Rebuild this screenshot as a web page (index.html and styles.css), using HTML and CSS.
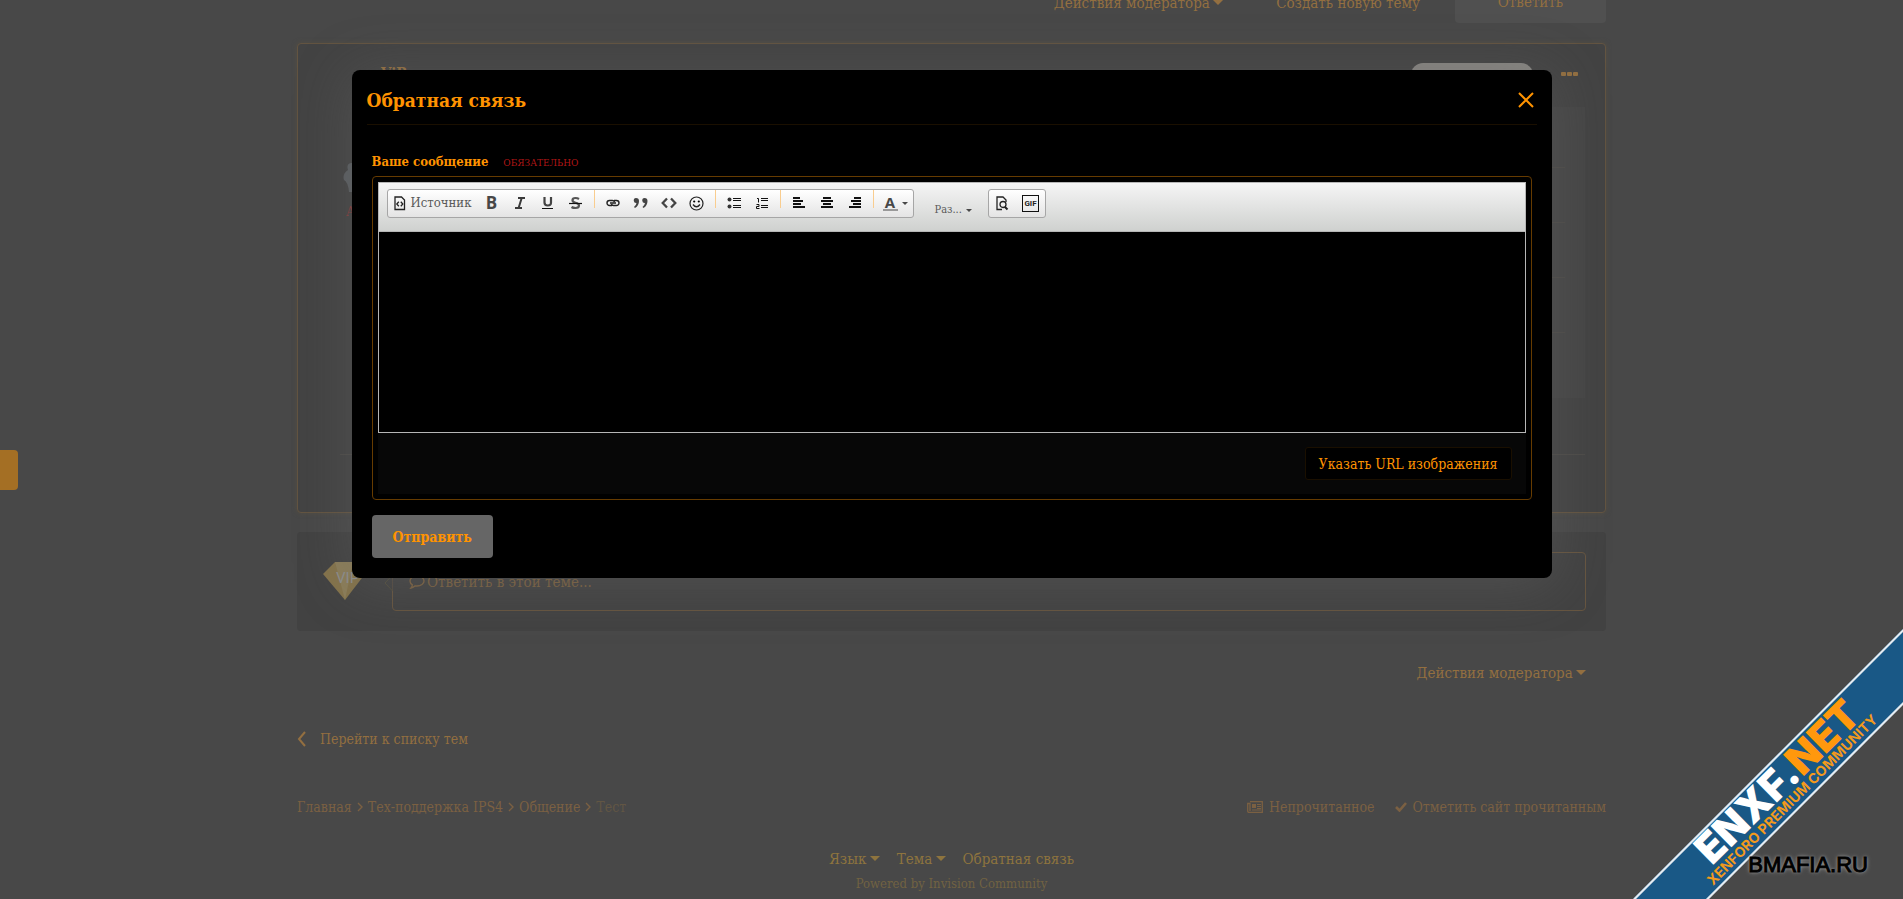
FILE: index.html
```
<!DOCTYPE html>
<html lang="ru">
<head>
<meta charset="utf-8">
<title>Обратная связь</title>
<link rel="stylesheet" href="styles.css">
</head>
<body>
<main class="page">
  <nav class="topbar">
    <a href="#" class="link">Действия модератора <i class="caret"></i></a>
    <a href="#" class="link">Создать новую тему</a>
    <a href="#" class="reply-btn">Ответить</a>
  </nav>

  <article class="post">
    <header class="post-head">
      <a href="#" class="author">ViR</a>
      <span class="badge"></span>
      <button class="dots" aria-label="Ещё"><i></i><i></i><i></i></button>
    </header>
    <div class="post-body">
      <div class="post-user">
        <svg class="avatar" viewBox="0 0 60 34"><path d="M8 3Q3 4 5 10Q-1 14 1 20Q5 22 6 32H60V3Z"/></svg>
        <span class="rank">Администратор</span>
      </div>
      <div class="post-text"><hr><hr><hr><hr></div>
    </div>
    <hr class="post-line">
  </article>

  <section class="answer">
    <svg class="diamond" viewBox="0 0 44 40"><path d="M13 1H31L43 13L23 39L1 13Z" fill="#84734b"/><path d="M13 1L23 39L31 1Z" fill="#8b7d59"/><text x="14" y="22" class="vip">VIP</text></svg>
    <a href="#" class="answer-box">
      <svg class="answer-tip" viewBox="0 0 9 16"><path d="M8.500 0L1 8L8.500 16"/></svg>
      <svg class="bubble" viewBox="0 0 16 14"><path d="M8 1C12 1 15 3.200 15 6S12 11 8 11C7.400 11 6.800 11 6.200 10.800C5 12 3.500 12.700 2 13C2.800 12 3.300 11 3.400 9.800C2 9 1 7.600 1 6C1 3.200 4 1 8 1Z"/></svg>
      Ответить в этой теме...
    </a>
  </section>

  <div class="moderate"><a href="#" class="link">Действия модератора <i class="caret"></i></a></div>

  <a href="#" class="back"><svg viewBox="0 0 10 16"><path d="M8 1L2 8L8 15"/></svg>Перейти к списку тем</a>

  <div class="crumbs">
    <nav class="trail">
      <a href="#">Главная</a><svg viewBox="0 0 6 10"><path d="M1 1L5 5L1 9"/></svg>
      <a href="#">Тех-поддержка IPS4</a><svg viewBox="0 0 6 10"><path d="M1 1L5 5L1 9"/></svg>
      <a href="#">Общение</a><svg viewBox="0 0 6 10"><path d="M1 1L5 5L1 9"/></svg>
      <span>Тест</span>
    </nav>
    <nav class="marks">
      <a href="#"><svg viewBox="0 0 16 12" width="16" height="12"><path d="M3 .7H15.300V11.300H2Q.7 11.300 .7 10V2.500H3V10" fill="none" stroke="currentColor" stroke-width="1.300"/><path d="M5 3H9V7H5ZM10 3H14V4H10ZM10 5H14V6H10ZM10 7H14V8H10ZM5 8.500H14V9.500H5Z" fill="currentColor"/></svg>Непрочитанное</a>
      <a href="#"><svg viewBox="0 0 12 10" width="12" height="10"><path d="M1 5L4.500 8.500L11 1" fill="none" stroke="currentColor" stroke-width="2.600"/></svg>Отметить сайт прочитанным</a>
    </nav>
  </div>

  <footer class="footer">
    <nav class="foot-links">
      <a href="#">Язык <i class="caret"></i></a>
      <a href="#">Тема <i class="caret"></i></a>
      <a href="#">Обратная связь</a>
    </nav>
    <a href="#" class="powered">Powered by Invision Community</a>
  </footer>
</main>

<button class="side-tab" aria-label="Меню"></button>

<div class="overlay">
  <form class="dialog" role="dialog" aria-labelledby="dlg-title">
    <header class="dialog-head">
      <h2 id="dlg-title">Обратная связь</h2>
      <button type="button" class="close" aria-label="Закрыть"><svg viewBox="0 0 16 16"><path d="M1 1L15 15M15 1L1 15"/></svg></button>
    </header>
    <div class="dialog-body">
      <div class="field-head"><label for="msg">Ваше сообщение</label><span class="required">Обязательно</span></div>
      <div class="editor-frame">
        <div class="editor">
          <div class="toolbar">
            <div class="group">
              <button type="button" class="tool source"><svg width="12" height="15" viewBox="0 0 12 15"><path d="M1 1H7.500L10.500 4V13.500H1Z" fill="none" stroke="#222" stroke-width="1.300"/><path d="M4.800 5.800L2.800 8L4.800 10.200M6.800 5.800L8.800 8L6.800 10.200" fill="none" stroke="#222" stroke-width="1.300"/></svg><span>Источник</span></button>
              <button type="button" class="tool b" aria-label="Жирный">B</button>
              <button type="button" class="tool" aria-label="Курсив"><svg width="12" height="14" viewBox="0 0 12 14"><path d="M4 2H11M1 12H8M7.700 2L4.600 12" fill="none" stroke="#3a3a3a" stroke-width="2"/></svg></button>
              <button type="button" class="tool" aria-label="Подчёркнутый"><svg width="12" height="14" viewBox="0 0 12 14"><path d="M2.500 1V6.500Q2.500 9.500 5.800 9.500T9 6.500V1" fill="none" stroke="#444" stroke-width="2.200"/><path d="M0 12.500H11" stroke="#111"/></svg></button>
              <button type="button" class="tool" aria-label="Зачёркнутый"><svg width="13" height="14" viewBox="0 0 13 14"><path d="M10 3Q8.500 2 6.500 2Q3.500 2 3.500 4.200Q3.500 6 6.500 6.700Q10 7.500 10 9.500Q10 12 6.500 12Q4 12 2.500 11" fill="none" stroke="#555" stroke-width="2.200"/><path d="M0 7.500H13" stroke="#111" stroke-width="1.200"/></svg></button>
              <i class="sep"></i>
              <button type="button" class="tool" aria-label="Ссылка"><svg width="14" height="8" viewBox="0 0 14 8"><path d="M6 6.500H3.500A2.500 2.500 0 0 1 3.500 1.500H6.500Q8 1.500 8.500 3M8 1.500H10.500A2.500 2.500 0 0 1 10.500 6.500H7.500Q6 6.500 5.500 5M4 4H10" fill="none" stroke="#222" stroke-width="1.400"/></svg></button>
              <button type="button" class="tool" aria-label="Цитата"><svg width="15" height="12" viewBox="0 0 15 12"><path d="M3 1A2.500 2.500 0 1 0 3.500 6Q3 8.500 1 10L2 11Q6 8.500 6 4Q6 1 3 1ZM11.500 1A2.500 2.500 0 1 0 12 6Q11.500 8.500 9.500 10L10.500 11Q14.500 8.500 14.500 4Q14.500 1 11.500 1Z" fill="#444"/></svg></button>
              <button type="button" class="tool" aria-label="Код"><svg width="16" height="12" viewBox="0 0 16 12"><path d="M6 1.500L1.700 6L6 10.500M10 1.500L14.300 6L10 10.500" fill="none" stroke="#444" stroke-width="2.300"/></svg></button>
              <button type="button" class="tool" aria-label="Смайлы"><svg width="15" height="15" viewBox="0 0 15 15"><circle cx="7.500" cy="7.500" r="6.500" fill="none" stroke="#222" stroke-width="1.200"/><path d="M4 8.500Q7.500 13 11 8.500" fill="none" stroke="#222" stroke-width="1.300"/><circle cx="5.200" cy="5.500" r="1.100"/><circle cx="9.800" cy="5.500" r="1.100"/></svg></button>
              <i class="sep"></i>
              <button type="button" class="tool" aria-label="Маркированный список"><svg width="14" height="12" viewBox="0 0 14 12"><circle cx="2.500" cy="2.500" r="2" fill="#333"/><circle cx="2.500" cy="9.500" r="2" fill="#333"/><path d="M6 1.500H14M6 3.500H14M6 8.500H14M6 10.500H14" stroke="#111"/></svg></button>
              <button type="button" class="tool" aria-label="Нумерованный список"><svg width="12" height="12" viewBox="0 0 12 12"><path d="M1 1.500H2.500V5.500M.5 7.500H3V9.500H.5V11.500H3.500" fill="none" stroke="#111"/><path d="M5 1.500H12M5 3.500H12M5 8.500H12M5 10.500H12" stroke="#111"/></svg></button>
              <i class="sep"></i>
              <button type="button" class="tool" aria-label="По левому краю"><svg width="12" height="12" viewBox="0 0 12 12"><path d="M0 1H7M0 4H10M0 7H8M0 10H12" stroke="#111" stroke-width="2"/></svg></button>
              <button type="button" class="tool" aria-label="По центру"><svg width="12" height="12" viewBox="0 0 12 12"><path d="M2 1H10M0 4H12M2 7H10M0 10H12" stroke="#111" stroke-width="2"/></svg></button>
              <button type="button" class="tool" aria-label="По правому краю"><svg width="12" height="12" viewBox="0 0 12 12"><path d="M5 1H12M2 4H12M4 7H12M0 10H12" stroke="#111" stroke-width="2"/></svg></button>
              <i class="sep"></i>
              <button type="button" class="tool color" aria-label="Цвет текста"><span>A</span><i class="tri"></i></button>
            </div>
            <button type="button" class="size">Раз...<i class="tri"></i></button>
            <div class="group">
              <button type="button" class="tool" aria-label="Просмотр"><svg width="13" height="15" viewBox="0 0 13 15"><path d="M6 13.500H1V1H7L10 4V6" fill="none" stroke="#222" stroke-width="1.300"/><circle cx="7" cy="8.500" r="3" fill="none" stroke="#222" stroke-width="1.300"/><path d="M9 11L11.500 13.500" stroke="#222" stroke-width="2"/></svg></button>
              <button type="button" class="tool"><span class="gif">GIF</span></button>
            </div>
          </div>
          <textarea id="msg"></textarea>
        </div>
        <div class="attach"><button type="button" class="url-btn">Указать URL изображения</button></div>
      </div>
      <button type="submit" class="submit">Отправить</button>
    </div>
  </form>
</div>

<svg class="ribbon" viewBox="0 0 272 272" aria-label="ENXF.NET">
  <path d="M272 2L2 272H76L272 76Z" fill="#195886"/>
  <path d="M273 2.500L3 272.500M273 75.500L75 273.500" stroke="#e4ecf2" stroke-width="2.200"/>
  <g transform="translate(81 239) rotate(-44.500)">
    <text class="rib-big" x="0" y="0">ENXF.<tspan fill="#ff980d">NET</tspan></text>
  </g>
  <g transform="translate(82 259) rotate(-45)"><text class="rib-small" x="0" y="0">XENFORO PREMIUM COMMUNITY</text></g>
</svg>
<span class="watermark">BMAFIA.RU</span>
</body>
</html>
```

FILE: styles.css
```
* { box-sizing: border-box; }

body {
  margin: 0;
  height: 100vh;
  overflow: hidden;
  position: relative;
  background: #484848;
  color: #936f40;
  font: 15px/20px "Roboto Slab", "DejaVu Serif Condensed", "DejaVu Serif", serif;
}

a { color: inherit; text-decoration: none; }
button { font: inherit; color: inherit; border: 0; padding: 0; background: none; }
svg { display: block; flex: none; }

.page { max-width: 1309px; margin: 0 auto; }

.caret {
  display: inline-block;
  border: 5px solid transparent;
  border-top-color: currentColor;
  border-bottom: 0;
  vertical-align: 3px;
  margin-left: -1px;
}

.topbar { display: flex; justify-content: flex-end; align-items: center; gap: 53px; margin-top: -18px; }
.reply-btn {
  width: 151px;
  line-height: 41px;
  text-align: center;
  background: #505050;
  border-radius: 4px;
  margin-left: -18px;
}

.post {
  height: 470px;
  margin-top: 20px;
  background: #434343;
  border: 1px solid #635441;
  border-radius: 4px;
  box-shadow: 0 0 5px #544e42;
  padding: 19px 20px 0 42px;
}
.post-head { display: flex; align-items: flex-start; height: 44px; }
.author { flex: 1; margin-left: 41px; font-weight: bold; }
.badge { width: 122px; height: 24px; border-radius: 12px; background: #868480; }
.dots { display: flex; gap: 1px; margin: 9px 7px 0 28px; }
.dots i { width: 5px; height: 4px; border-radius: 1px; background: #936f40; }
.post-body { display: flex; gap: 20px; }
.post-user { width: 120px; margin-top: 53px; }
.avatar { width: 60px; fill: #5a5d60; margin-left: 3px; }
.rank { display: block; margin: 8px 0 0 6px; color: #833c3c; font-size: 13px; }
.post-text { flex: 1; height: 291px; padding: 60px 20px 0; background: #464646; }
hr { border: 0; height: 1px; margin: 0 0 54px; background: #4d4b48; }
.post-line { margin-top: 56px; }

.answer {
  display: flex;
  gap: 26px;
  margin-top: 19px;
  padding: 20px;
  padding-left: 25px;
  background: #424242;
  border-radius: 4px;
}
.diamond { width: 44px; height: 40px; margin-top: 9px; }
.vip { font: 15px Roboto, sans-serif; fill: #8d8d8d; }
.answer-box {
  flex: 1;
  height: 59px;
  position: relative;
  display: flex;
  align-items: center;
  gap: 2px;
  padding-left: 16px;
  border: 1px solid #665540;
  border-radius: 4px;
  color: #7a6040;
}
.answer-tip { position: absolute; left: -9px; top: 22px; width: 9px; height: 16px; fill: #424242; stroke: #54503f; }
.bubble { width: 16px; height: 14px; fill: none; stroke: currentColor; stroke-width: 1.4; }

.moderate { text-align: right; margin-top: 32px; padding-right: 20px; }

.back { display: flex; align-items: center; gap: 13px; margin-top: 46px; font-size: 14px; }
.back svg { width: 10px; height: 16px; fill: none; stroke: currentColor; stroke-width: 2; }

.crumbs { display: flex; justify-content: space-between; margin-top: 48px; font-size: 14px; color: #7b6042; }
.trail, .marks, .marks a { display: flex; align-items: center; }
.trail { gap: 5px; }
.trail svg { width: 6px; height: 10px; fill: none; stroke: currentColor; stroke-width: 1.4; }
.trail span { color: #625644; }
.marks { gap: 20px; }
.marks a { gap: 6px; }

.footer { margin-top: 32px; text-align: center; color: #8e743e; }
.foot-links { display: flex; justify-content: center; gap: 17px; }
.powered { display: block; margin-top: 5px; font-size: 13px; color: #716242; }

.side-tab { position: absolute; left: 0; top: 450px; width: 18px; height: 40px; background: #a46f24; border-radius: 0 4px 4px 0; }

.overlay { position: absolute; inset: 0; display: flex; justify-content: center; align-items: flex-start; padding: 70px 20px 0; }
.dialog {
  width: 1200px;
  background: #000;
  border-radius: 8px;
  color: #ff9300;
  box-shadow: 0 5px 55px rgba(110, 110, 110, .35);
}
.dialog-head {
  display: flex;
  justify-content: space-between;
  align-items: center;
  height: 55px;
  margin: 0 15px;
  padding: 5px 3px 0 0;
  border-bottom: 1px solid #1a0f00;
}
.dialog-head h2 { margin: 0; font-size: 19px; line-height: 30px; }
.close svg { width: 16px; height: 16px; stroke: currentColor; stroke-width: 2; }

.dialog-body { padding: 27px 20px 20px; }
.field-head { display: flex; align-items: baseline; gap: 15px; height: 24px; }
.field-head label { font-size: 13px; font-weight: bold; }
.required { font-size: 10px; color: #b01616; text-transform: uppercase; }

.editor-frame { border: 1px solid #663b00; border-radius: 4px; padding: 5px; }
.editor { border: 1px solid #b6b6b6; }
.toolbar {
  display: flex;
  align-items: flex-start;
  height: 49px;
  padding: 6px 8px;
  background: linear-gradient(#f5f5f5, #cfd1cf);
  border-bottom: 1px solid #b6b6b6;
}
.group { display: flex; height: 29px; border: 1px solid #a6a6a6; border-radius: 3px; background: linear-gradient(#fff, #e4e4e4); }
.tool { width: 28px; height: 26px; display: flex; align-items: center; justify-content: center; color: #474747; }
.source { width: 90px; gap: 5px; font-size: 13px; color: #5a5a5a; }
.b { font: bold 17px/26px "Open Sans", sans-serif; }
.sep { width: 1px; height: 18px; margin: 0 4px; background: #f9cd8f; }
.color { width: 35px; gap: 4px; }
.color span { width: 15px; font: bold 15px/14px "Open Sans", sans-serif; border-bottom: 2px solid #999; }
.tri { border: 3px solid transparent; border-top-color: #474747; border-bottom: 0; }
.size { display: flex; align-items: center; gap: 4px; width: 74px; height: 26px; padding-left: 21px; margin-top: 8px; font-size: 11px; color: #5a5a5a; }
.gif { width: 17px; height: 17px; border: 1px solid #111; font: bold 8px/15px Roboto, sans-serif; text-align: center; color: #222; }
textarea { display: block; width: 100%; height: 200px; border: 0; padding: 20px; resize: none; background: #000; color: #ff9300; font: inherit; }
.attach { display: flex; justify-content: flex-end; padding: 14px; background: #070707; }
.url-btn { height: 33px; padding: 0 13px; font-size: 14px; background: #000; border: 1px solid #1a0f00; border-radius: 3px; }
.submit { height: 43px; margin-top: 15px; padding: 0 21px; font-size: 14px; font-weight: bold; background: #666; border-radius: 4px; }

.ribbon { position: absolute; right: 0; bottom: 0; width: 272px; height: 272px; }
.rib-big { font: 900 41px Inter, sans-serif; fill: #fff; }
.rib-small { font: bold 14px Inter, sans-serif; fill: #f39a1c; }
.watermark {
  position: absolute;
  right: 35px;
  bottom: 20px;
  font: 22px/28px "Liberation Sans", sans-serif;
  color: #000;
  -webkit-text-stroke: 1px #000;
  text-shadow: 0 0 3px #aaa, 0 0 5px #999;
}
```
